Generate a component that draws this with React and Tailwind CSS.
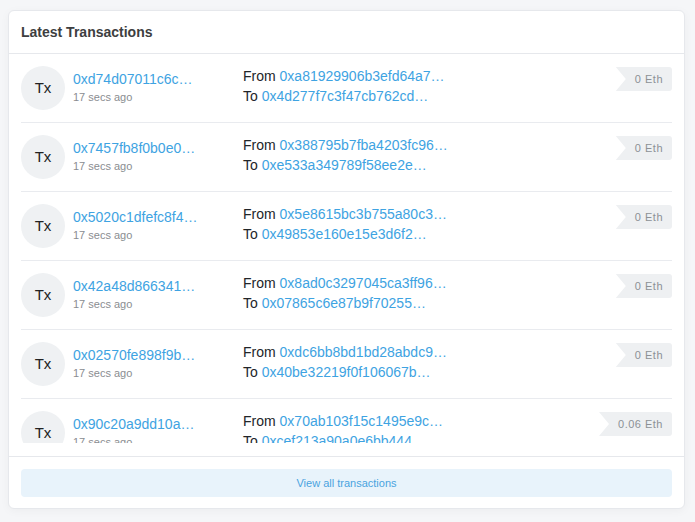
import React from 'react';

const txs = [
    { hash: '0xd74d07011c6c…', from: '0xa81929906b3efd64a7…', to: '0x4d277f7c3f47cb762cd…', value: '0 Eth' },
    { hash: '0x7457fb8f0b0e0…', from: '0x388795b7fba4203fc96…', to: '0xe533a349789f58ee2e…', value: '0 Eth' },
    { hash: '0x5020c1dfefc8f4…', from: '0x5e8615bc3b755a80c3…', to: '0x49853e160e15e3d6f2…', value: '0 Eth' },
    { hash: '0x42a48d866341…', from: '0x8ad0c3297045ca3ff96…', to: '0x07865c6e87b9f70255…', value: '0 Eth' },
    { hash: '0x02570fe898f9b…', from: '0xdc6bb8bd1bd28abdc9…', to: '0x40be32219f0f106067b…', value: '0 Eth' },
    { hash: '0x90c20a9dd10a…', from: '0x70ab103f15c1495e9c…', to: '0xcef213a90a0e6bb444…', value: '0.06 Eth' },
];

const TxRow = ({ tx }) => (
    <div className="flex items-start h-[69px] pt-[12px] border-b border-[#e9ebef] shrink-0">
        <div className="w-[44px] h-[44px] rounded-full bg-[#eff1f3] flex items-center justify-center text-[15px] text-[#222] shrink-0">
            Tx
        </div>
        <div className="ml-2 w-[170px] pt-[3px] shrink-0">
            <div className="text-[14px] leading-5 text-[#3ea3e2]">{tx.hash}</div>
            <div className="text-[11px] leading-4 text-[#8a8d91]">17 secs ago</div>
        </div>
        <div className="flex-1 text-[14px] leading-5 text-[#212529]">
            <div>From <span className="text-[#3ea3e2]">{tx.from}</span></div>
            <div>To <span className="text-[#3ea3e2]">{tx.to}</span></div>
        </div>
        <div
            className="mt-[1px] h-6 pl-[19px] pr-[9px] flex items-center bg-[#eef0f2] rounded-r-[3px] text-[11px] tracking-[0.5px] text-[#8c9196]"
            style={{ clipPath: 'polygon(0 0, 100% 0, 100% 100%, 0 100%, 10px 50%)' }}
        >
            {tx.value}
        </div>
    </div>
);

const App = () => {
    return (
        <div className="min-h-screen bg-[#f5f6f8] pt-[10px] font-['Liberation_Sans',Arial,sans-serif]">
            <div className="ml-2 w-[677px] bg-white border border-[#e6e8ec] rounded-md shadow-[0_2px_10px_rgba(0,0,0,0.04)]">
                <div className="h-[43px] px-3 flex items-center border-b border-[#e6e8ec]">
                    <h2 className="text-[14px] font-bold text-[#3d3e40]">Latest Transactions</h2>
                </div>

                <div className="px-3 pb-[13px]">
                    <div className="h-[389px] overflow-hidden flex flex-col">
                        {txs.map((tx, i) => (
                            <TxRow key={i} tx={tx} />
                        ))}
                    </div>
                </div>

                <div className="border-t border-[#e6e8ec] px-3 pt-3 pb-[11px]">
                    <button className="w-full h-7 rounded bg-[#e8f3fb] text-[11px] text-[#4aa3df]">
                        View all transactions
                    </button>
                </div>
            </div>
        </div>
    );
};

export default App;
